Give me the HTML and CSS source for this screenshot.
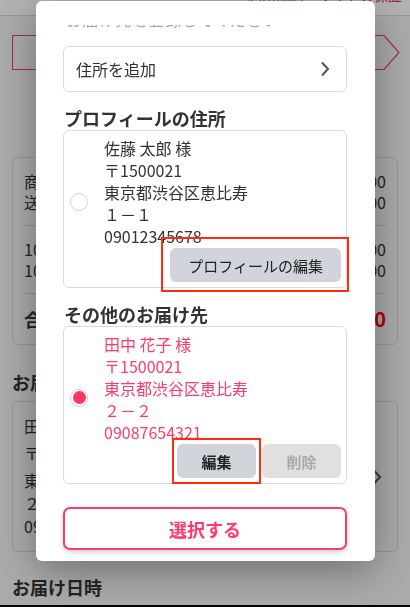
FILE: index.html
```html
<!DOCTYPE html>
<html lang="ja">
	<head>
		<meta charset="utf-8" />
		<title>お届け先の選択</title>
		<link rel="stylesheet" href="styles.css">
	</head>
	<body>
		<div class="page">
			<header class="site-header">
				<span class="header-links">利用規約・サイトの保証</span>
			</header>
			<div class="stepper">
				<svg width="388" height="36" viewBox="0 0 388 36">
					<path d="M0.5 0.5 H372 L387 17.5 L372 34.5 H0.5 Z" fill="none" stroke="#e8436f" stroke-width="1.2" />
				</svg>
			</div>
			<section class="summary">
				<div class="summary-group">
					<div class="summary-row"><span>商品小計</span><span>¥1,000</span></div>
					<div class="summary-row"><span>送料</span><span>¥500</span></div>
				</div>
				<div class="summary-group">
					<div class="summary-row"><span>10%対象</span><span>¥1,500</span></div>
					<div class="summary-row"><span>10%消費税</span><span>¥100</span></div>
				</div>
				<div class="summary-total"><span>合計</span><span class="total-price">¥1,600</span></div>
			</section>
			<h2 class="page-title">お届け先</h2>
			<section class="dest-card">
				<div class="dest-lines">
					<div class="dest-line">田中 花子 様</div>
					<div class="dest-line">〒1500021</div>
					<div class="dest-line">東京都渋谷区恵比寿</div>
					<div class="dest-line">２－２</div>
					<div class="dest-line">09087654321</div>
				</div>
				<svg class="dest-arrow" width="10" height="16" viewBox="0 0 10 16">
					<path d="M2 1.5 L8 8 L2 14.5" fill="none" stroke="#555" stroke-width="2" />
				</svg>
			</section>
			<h2 class="page-title page-title-date">お届け日時</h2>
		</div>

		<div class="backdrop"></div>

		<div class="modal">
			<div class="modal-top"></div>
			<div class="lead-clip">
				<p class="modal-lead">お届け先を登録してください</p>
			</div>
			<div class="add-address">
				<span>住所を追加</span>
				<svg width="10" height="16" viewBox="0 0 10 16">
					<path d="M2 1.5 L8 8 L2 14.5" fill="none" stroke="#555" stroke-width="2" />
				</svg>
			</div>

			<h3 class="section-title">プロフィールの住所</h3>
			<div class="address-card">
				<span class="radio"></span>
				<div class="address-body">
					<div class="address-lines">
						<div>佐藤 太郎 様</div>
						<div>〒1500021</div>
						<div>東京都渋谷区恵比寿</div>
						<div>１－１</div>
						<div>09012345678</div>
					</div>
					<div class="address-actions">
						<button type="button" class="btn btn-edit marked marked-wide">プロフィールの編集</button>
					</div>
				</div>
			</div>

			<h3 class="section-title">その他のお届け先</h3>
			<div class="address-card is-selected">
				<span class="radio radio-checked"></span>
				<div class="address-body">
					<div class="address-lines">
						<div>田中 花子 様</div>
						<div>〒1500021</div>
						<div>東京都渋谷区恵比寿</div>
						<div>２－２</div>
						<div>09087654321</div>
					</div>
					<div class="address-actions">
						<button type="button" class="btn btn-edit btn-small marked marked-tight">編集</button>
						<button type="button" class="btn btn-delete btn-small">削除</button>
					</div>
				</div>
			</div>

			<button type="button" class="btn-select">選択する</button>
		</div>

		<div class="bottom-bar"></div>
	</body>
</html>
```

FILE: styles.css
```css
html,
body {
	margin: 0;
	background-color: #f4f4f4;
	font-family: "Noto Sans CJK JP", "Noto Sans", sans-serif;
	color: #333;
}
.page {
	width: 410px;
	height: 607px;
	overflow: hidden;
}
.site-header {
	height: 15px;
	background-color: #fff;
	border-bottom: 1px solid #d6d6d6;
	overflow: hidden;
	text-align: right;
	padding-right: 8px;
}
.header-links {
	display: block;
	margin-top: -15px;
	font-size: 14px;
	line-height: 20px;
	color: #e0305a;
}
.stepper {
	margin: 19px 0 0 12px;
	height: 36px;
}
.stepper svg {
	display: block;
}
.summary {
	margin: 86px 12px 0;
	border: 1px solid #d8d8d8;
	border-radius: 6px;
	padding: 0 11px;
	font-size: 16px;
}
.summary-group {
	padding: 13px 0 12px;
	border-bottom: 1px solid #d0d0d0;
	line-height: 21px;
}
.summary-row,
.summary-total {
	display: flex;
	justify-content: space-between;
}
.summary-total {
	padding: 12px 0 12px;
	line-height: 26px;
	font-weight: bold;
	font-size: 18px;
}
.total-price {
	color: #ff0000;
	font-size: 20px;
}
.page-title {
	margin: 25px 12px 0;
	font-size: 18px;
	line-height: 24px;
	font-weight: bold;
}
.page-title-date {
	margin-top: 23px;
}
.dest-card {
	margin: 7px 12px 0;
	border: 1px solid #d8d8d8;
	border-radius: 6px;
	padding: 13px 15px 13px 11px;
	display: flex;
	align-items: center;
	justify-content: space-between;
	font-size: 16px;
}
.dest-line {
	line-height: 23px;
}
.dest-line:nth-child(-n+2) {
	margin-bottom: 4px;
}
.dest-arrow {
	display: block;
}

.backdrop {
	position: fixed;
	inset: 0;
	background-color: rgba(0, 0, 0, 0.3);
}
.bottom-bar {
	position: fixed;
	left: 0;
	right: 0;
	bottom: 0;
	height: 2px;
	background-color: #000;
}

/* modal */
.modal {
	position: fixed;
	top: 1px;
	left: 36px;
	width: 339px;
	background-color: #fff;
	border-radius: 6px;
	box-shadow: 0 10px 40px rgba(0, 0, 0, 0.35);
	box-sizing: border-box;
	padding: 0 28px 11px 27px;
}
.modal-top {
	height: 24px;
}
.lead-clip {
	height: 7px;
	overflow: hidden;
	margin-bottom: 14px;
}
.modal-lead {
	margin: -17px 0 0 3px;
	font-size: 16px;
	line-height: 22px;
	color: #aaa;
	letter-spacing: 0.5px;
}
.add-address {
	height: 46px;
	box-sizing: border-box;
	border: 1px solid #dcdcdc;
	border-radius: 6px;
	display: flex;
	align-items: center;
	justify-content: space-between;
	padding: 0 16px 0 12px;
	font-size: 16px;
	color: #333;
}
.add-address svg {
	display: block;
}
.section-title {
	margin: 14px 0 0 1px;
	font-size: 18px;
	line-height: 24px;
	font-weight: bold;
	color: #333;
}
.address-card {
	border: 1px solid #dcdcdc;
	border-radius: 6px;
	padding: 6px 5px 5px 6px;
	display: flex;
	align-items: center;
	gap: 16px;
}
.radio {
	flex: none;
	width: 18px;
	height: 18px;
	box-sizing: border-box;
	border: 1px solid #d4d4d4;
	border-radius: 50%;
	background-color: #fff;
	margin-bottom: 16px;
	display: flex;
	align-items: center;
	justify-content: center;
}
.radio-checked::after {
	content: "";
	width: 13px;
	height: 13px;
	border-radius: 50%;
	background-color: #ff3566;
}
.address-body {
	flex: 1;
}
.address-lines {
	font-size: 16px;
	line-height: 22px;
	color: #333;
}
.is-selected .address-lines {
	color: #ff3b6e;
}
.address-actions {
	margin-top: 1px;
	display: flex;
	justify-content: flex-end;
	gap: 6px;
}
.btn {
	position: relative;
	height: 34px;
	border: none;
	border-radius: 6px;
	font-family: "Noto Sans CJK JP", "Noto Sans", sans-serif;
	font-size: 15px;
	padding: 0 18px;
	cursor: pointer;
}
.btn-edit {
	background-color: #d1d5db;
	color: #222;
}
.btn-small {
	width: 79px;
	padding: 0;
	font-weight: bold;
}
.btn-delete {
	background-color: #e0e0e0;
	color: #a8a8a8;
}
.marked::after {
	content: "";
	position: absolute;
	border: 2px solid #ff2d0d;
}
.marked-wide::after {
	inset: -11px -8px -10px -9px;
}
.marked-tight::after {
	inset: -6px -5px -6px -5px;
}
.btn-select {
	display: block;
	width: 100%;
	height: 43px;
	margin-top: 23px;
	background-color: #fff;
	border: 2px solid #ff3b6e;
	border-radius: 7px;
	box-shadow: 0 2px 5px rgba(0, 0, 0, 0.2);
	color: #ff3b6e;
	font-family: "Noto Sans CJK JP", "Noto Sans", sans-serif;
	font-size: 18px;
	font-weight: bold;
	cursor: pointer;
}
```
